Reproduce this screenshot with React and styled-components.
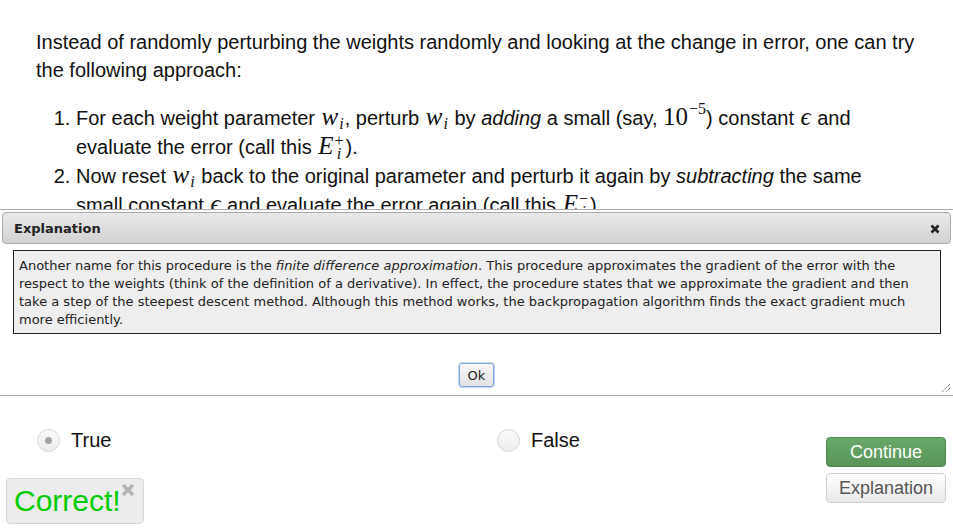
import React from 'react'
import styled, {createGlobalStyle} from 'styled-components'

const GlobalStyle = createGlobalStyle`
  html, body {
    margin: 0;
    padding: 0;
    background: #fff;
  }
  body {
    font-family: "Liberation Sans", Arial, sans-serif;
    color: #111;
    overflow: hidden;
  }
`;

// lesson text behind the dialog
const Lesson = styled.div`
  height: 209px;
  overflow: hidden;
  padding: 28px 38px 0 36px;
  box-sizing: border-box;
  font-size: 20px;
  line-height: 28px;
`;

const Para = styled.p`
  margin: 0 0 20px;
`;

const Steps = styled.ol`
  margin: 0 6px 0 0;
  padding-left: 40px;
  line-height: 29px;
`;

const Mi = styled.span`
  font-family: "Liberation Serif", "DejaVu Serif", serif;
  font-style: italic;
  font-size: 25px;
  line-height: 0;
  margin: 0 1px;
`;

const Mn = styled.span`
  font-family: "Liberation Serif", "DejaVu Serif", serif;
  font-size: 25px;
  line-height: 0;
`;

const Sub = styled.span`
  font-family: "Liberation Serif", "DejaVu Serif", serif;
  font-style: italic;
  font-size: 16px;
  line-height: 0;
  vertical-align: -4px;
  margin-right: 1px;
`;

const Sup = styled.span`
  font-family: "Liberation Serif", "DejaVu Serif", serif;
  font-size: 16px;
  line-height: 0;
  vertical-align: 11px;
  margin-left: 1px;
`;

const Scripts = styled.span`
  display: inline-block;
  font-family: "Liberation Serif", "DejaVu Serif", serif;
  font-size: 16px;
  line-height: 13px;
  vertical-align: -5px;
  margin: -20px 2px -20px 0;
  text-align: center;
`;

const ScriptLine = styled.span`
  display: block;
  font-style: ${(p) => (p.italic ? 'italic' : 'normal')};
`;

// dialog
const Dialog = styled.div`
  position: relative;
  background: #fff;
  border-top: 1px solid #aaa;
  border-bottom: 1px solid #aaa;
  padding: 2px 2px 0;
  font-family: "DejaVu Sans", Verdana, sans-serif;
  font-size: 13px;
`;

const TitleBar = styled.div`
  height: 29px;
  display: flex;
  align-items: center;
  justify-content: space-between;
  padding: 1px 10px 0 11px;
  border: 1px solid #aaa;
  border-radius: 4px;
  background: linear-gradient(#e9e9e9, #d2d2d2);
  color: #222;
`;

const Title = styled.span`
  font-weight: bold;
  font-size: 13px;
`;

const CloseIcon = styled.svg`
  width: 10px;
  height: 10px;
`;

const Body = styled.div`
  margin: 6px 10px 0 11px;
  padding: 6px 5px 4px;
  border: 1px solid #222;
  background: #eee;
  color: #222;
  line-height: 18px;
`;

const ButtonPane = styled.div`
  display: flex;
  justify-content: center;
  padding: 29px 0 8px;
`;

const OkButton = styled.button`
  height: 24px;
  width: 35px;
  padding: 0;
  font-family: "DejaVu Sans", Verdana, sans-serif;
  font-size: 13px;
  color: #222;
  border: 1px solid #7ea6e0;
  border-radius: 3px;
  background: linear-gradient(#f8f8f8, #e2e2e2);
  box-shadow: 0 0 0 1px #c5d8f3;
`;

const Resize = styled.svg`
  position: absolute;
  right: 2px;
  bottom: 2px;
  width: 12px;
  height: 12px;
`;

// question area
const Lower = styled.div`
  display: flex;
  justify-content: space-between;
  align-items: flex-start;
  padding-right: 7px;
`;

const LeftCol = styled.div`
  flex: 1;
`;

const Answers = styled.div`
  display: grid;
  grid-template-columns: 460px 1fr;
  margin-top: 32px;
  padding-left: 37px;
`;

const Choice = styled.label`
  display: flex;
  align-items: center;
  font-size: 20px;
  color: #111;
  height: 24px;
`;

const Radio = styled.span`
  width: 21px;
  height: 21px;
  border-radius: 50%;
  border: 1px solid #d6d6d6;
  background: linear-gradient(#fbfbfb, #ececec);
  display: flex;
  align-items: center;
  justify-content: center;
  margin-right: 11px;

  &::after {
    content: "";
    width: 7px;
    height: 7px;
    border-radius: 50%;
    background: ${(p) => (p.checked ? '#a3a3a3' : 'transparent')};
  }
`;

const Correct = styled.div`
  position: relative;
  margin: 26px 0 0 6px;
  width: 138px;
  height: 46px;
  box-sizing: border-box;
  background: #ececec;
  border: 1px solid #d8d8d8;
  border-radius: 4px;
  display: flex;
  align-items: center;
  padding: 0 0 0 7px;
  color: #0c0;
  font-size: 30px;
`;

const Dismiss = styled.svg`
  position: absolute;
  top: 4px;
  right: 8px;
  width: 14px;
  height: 14px;
`;

const ButtonStack = styled.div`
  display: flex;
  flex-direction: column;
  gap: 6px;
  margin-top: 41px;
`;

const ActionButton = styled.button`
  width: 120px;
  height: 30px;
  padding: 1px 0 0;
  font-family: "Liberation Sans", Arial, sans-serif;
  font-size: 18px;
  border-radius: 4px;
  border: 1px solid ${(p) => (p.primary ? '#4e8a4e' : '#cfcfcf')};
  color: ${(p) => (p.primary ? '#fff' : '#555')};
  background: ${(p) => (p.primary ? 'linear-gradient(#68a868, #5a955a)' : 'linear-gradient(#fff, #e8e8e8)')};
`;

const App = () => {
    return (
        <>
            <GlobalStyle/>
            <Lesson>
                <Para>
                    Instead of randomly perturbing the weights randomly and looking at the change in error, one can try
                    the following approach:
                </Para>
                <Steps>
                    <li>
                        For each weight parameter <Mi>w</Mi><Sub>i</Sub>, perturb <Mi>w</Mi><Sub>i</Sub> by <i>adding</i> a
                        small (say, <Mn>10</Mn><Sup>−5</Sup>) constant <Mi>ϵ</Mi> and evaluate the error (call
                        this <Mi>E</Mi><Scripts><ScriptLine>+</ScriptLine><ScriptLine italic>i</ScriptLine></Scripts>).
                    </li>
                    <li>
                        Now reset <Mi>w</Mi><Sub>i</Sub> back to the original parameter and perturb it again
                        by <i>subtracting</i> the same small constant <Mi>ϵ</Mi> and evaluate the error again (call
                        this <Mi>E</Mi><Scripts><ScriptLine>−</ScriptLine><ScriptLine italic>i</ScriptLine></Scripts>).
                    </li>
                </Steps>
            </Lesson>

            <Dialog>
                <TitleBar>
                    <Title>Explanation</Title>
                    <CloseIcon viewBox="0 0 10 10">
                        <path d="M1.5 1.5 L8.5 8.5 M8.5 1.5 L1.5 8.5" stroke="#222" strokeWidth="2.6"/>
                    </CloseIcon>
                </TitleBar>
                <Body>
                    Another name for this procedure is the <i>finite difference approximation</i>. This procedure
                    approximates the gradient of the error with the respect to the weights (think of the definition of a
                    derivative). In effect, the procedure states that we approximate the gradient and then take a step of
                    the steepest descent method. Although this method works, the backpropagation algorithm finds the exact
                    gradient much more efficiently.
                </Body>
                <ButtonPane>
                    <OkButton>Ok</OkButton>
                </ButtonPane>
                <Resize viewBox="0 0 12 12">
                    <path d="M11 3 L3 11 M11 7 L7 11" stroke="#444" strokeWidth="1" strokeDasharray="1 1"/>
                </Resize>
            </Dialog>

            <Lower>
                <LeftCol>
                    <Answers>
                        <Choice><Radio checked/>True</Choice>
                        <Choice><Radio/>False</Choice>
                    </Answers>
                    <Correct>
                        Correct!
                        <Dismiss viewBox="0 0 14 14">
                            <path d="M2 2 L12 12 M12 2 L2 12" stroke="#b4b4b4" strokeWidth="3.6"/>
                        </Dismiss>
                    </Correct>
                </LeftCol>
                <ButtonStack>
                    <ActionButton primary>Continue</ActionButton>
                    <ActionButton>Explanation</ActionButton>
                </ButtonStack>
            </Lower>
        </>
    )
}

export default App;
